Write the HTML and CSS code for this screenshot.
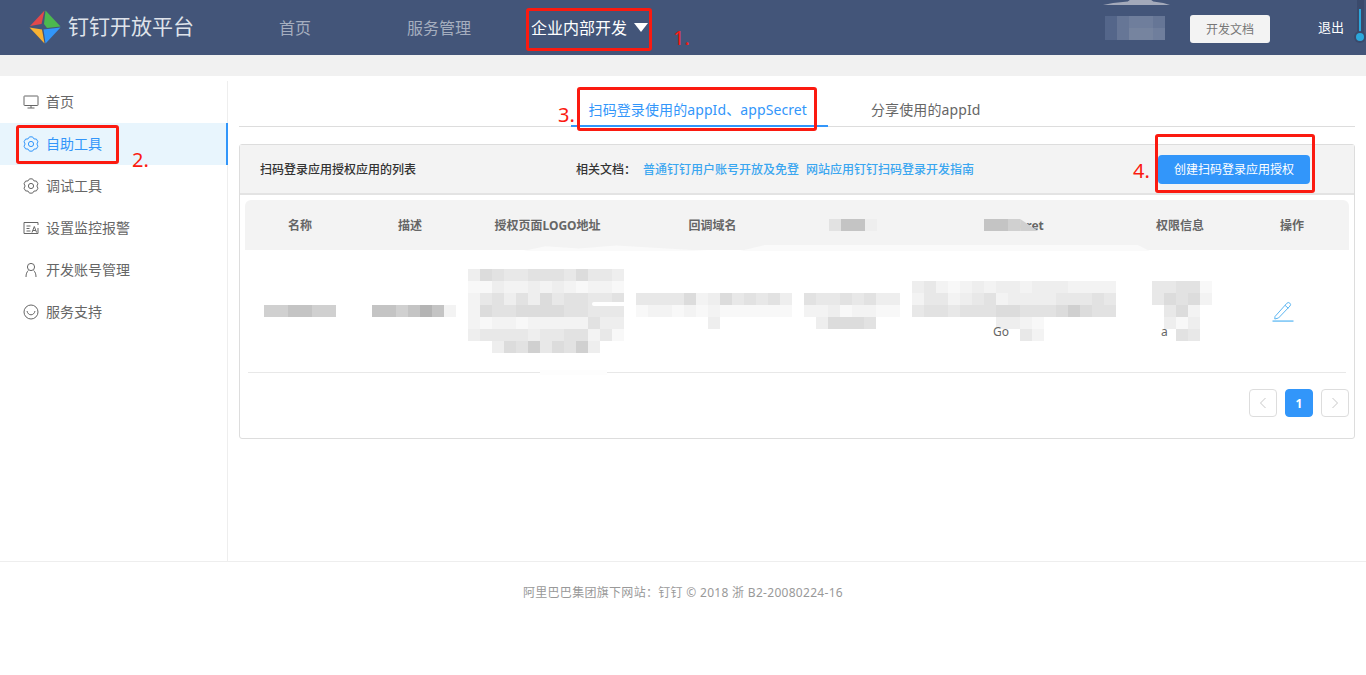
FILE: index.html
```html
<!DOCTYPE html>
<html lang="zh">
<head>
  <meta charset="UTF-8">
  <title>钉钉开放平台</title>
  <link rel="stylesheet" href="styles.css">
</head>
<body>
  <header class="topbar">
    <div class="logo">
      <svg class="logo-mark" viewBox="0 0 32 34" width="32" height="34">
        <path d="M15.5 0.5 L1 16 L12.5 14 Z" fill="#e2484a"/>
        <path d="M16.5 0.5 L31.5 16.5 L18 18 L15 14 Z" fill="#4cb84f"/>
        <path d="M0.5 17.5 L15.5 33.5 L13 19.5 Z" fill="#f9b233"/>
        <path d="M31.5 17.5 L16.5 33.5 L14.5 19.5 Z" fill="#3296fa"/>
      </svg>
      <span class="logo-text">钉钉开放平台</span>
    </div>
    <nav class="topnav">
      <a class="nav-home">首页</a>
      <a class="nav-service">服务管理</a>
      <a class="nav-current">企业内部开发<i class="caret"></i></a>
    </nav>
    <div class="top-right">
      <div class="mosaic user-mosaic" data-size="nav" data-rows="fdeed|fdgge"></div>
      <a class="doc-btn">开发文档</a>
      <a class="logout">退出</a>
    </div>
    <div class="top-smear"></div>
    <div class="top-pin"></div>
  </header>
  <div class="band"></div>

  <div class="main">
    <aside class="sidebar">
      <a class="side-item">
        <svg viewBox="0 0 16 16" width="16" height="16"><rect x="1" y="2" width="14" height="9.5" rx="0.5"/><path d="M8 11.5V14M4.5 14h7"/></svg>
        <span>首页</span>
      </a>
      <a class="side-item active">
        <svg viewBox="0 0 16 16" width="16" height="16"><path d="M6.480 .860H9.520L10.950 2.890 13.420 3.120 14.940 5.740 13.900 8 14.940 10.260 13.420 12.880 10.950 13.110 9.520 15.140H6.480L5.050 13.110 2.580 12.880 1.060 10.260 2.100 8 1.060 5.740 2.580 3.120 5.050 2.890Z"/><circle cx="8" cy="8" r="2.6"/></svg>
        <span>自助工具</span>
      </a>
      <a class="side-item">
        <svg viewBox="0 0 16 16" width="16" height="16"><path d="M6.480 .860H9.520L10.950 2.890 13.420 3.120 14.940 5.740 13.900 8 14.940 10.260 13.420 12.880 10.950 13.110 9.520 15.140H6.480L5.050 13.110 2.580 12.880 1.060 10.260 2.100 8 1.060 5.740 2.580 3.120 5.050 2.890Z"/><circle cx="8" cy="8" r="2.6"/></svg>
        <span>调试工具</span>
      </a>
      <a class="side-item">
        <svg viewBox="0 0 16 16" width="16" height="16"><path d="M15 5V2.500H1v11h14V8"/><path d="M3.500 6h4M3.500 8.500h3M3.500 11h4M9 12.500l2.300-6 2.300 6M9.800 10.500h3"/></svg>
        <span>设置监控报警</span>
      </a>
      <a class="side-item">
        <svg viewBox="0 0 16 16" width="16" height="16"><circle cx="8" cy="5" r="3.6"/><path d="M5.300 8.500C3.800 10 3 12 3 15M10.700 8.500c1.500 1.500 2.300 3.500 2.300 6.500"/></svg>
        <span>开发账号管理</span>
      </a>
      <a class="side-item">
        <svg viewBox="0 0 16 16" width="16" height="16"><circle cx="8" cy="8" r="7"/><path d="M4 7c.6 2.600 2.200 3.800 4 3.800S11.400 9.600 12 7"/></svg>
        <span>服务支持</span>
      </a>
    </aside>

    <section class="content">
      <div class="tabs">
        <a class="tab active">扫码登录使用的appId、appSecret</a>
        <a class="tab">分享使用的appId</a>
      </div>

      <div class="card">
        <div class="card-head">
          <span class="card-title">扫码登录应用授权应用的列表</span>
          <div class="doc-links">
            <b>相关文档：</b>
            <a>普通钉钉用户账号开放及免登</a>
            <a>网站应用钉钉扫码登录开发指南</a>
          </div>
          <button class="create-btn">创建扫码登录应用授权</button>
        </div>

        <div class="card-body">
          <div class="t-row t-head">
            <span>名称</span>
            <span>描述</span>
            <span>授权页面LOGO地址</span>
            <span>回调域名</span>
            <div class="mosaic" data-rows="5883"></div>
            <span class="secret-head"><i class="mosaic secret-mosaic" data-rows="887"></i>cret</span>
            <span>权限信息</span>
            <span class="op-head">操作</span>
          </div>
          <div class="t-smear smear-a"></div>
          <div class="t-smear smear-b"></div>
          <div class="t-row t-data">
            <div class="mosaic name-mosaic" data-rows="778877"></div>
            <div class="mosaic desc-mosaic" data-rows="8878982"></div>
            <div class="mosaic logo-mosaic" data-rows="3654455546443|1132232321221|2453536455445|2655666655444|2122122222533|3444434455241|0036574657300"></div>
            <div class="mosaic cb-mosaic" data-rows="4444623645453|1221212111111|0000003000000"></div>
            <div class="mosaic next-mosaic" data-rows="54454533|22312211|03666500"></div>
            <div class="mosaic" data-rows="34212323323332222|24423452333344454|45545556655567655|00000003321000000|00000000042000000"></div>
            <div class="mosaic perm-mosaic" data-rows="44551|46562|04620|03130|00540"></div>
            <div class="op-cell">
              <svg viewBox="0 0 22 22" width="22" height="22"><path d="M3 16.500 L14.800 3.300 Q16.200 1.800 17.800 3.100 Q19.300 4.500 18 6 L6.500 18 L2.800 19 Z M13 5.300 L16.300 8.300"/><path class="pen-line" d="M0.500 21.200H21.500"/></svg>
            </div>
          </div>
          <div class="t-smear smear-c"></div>
          <div class="t-smear smear-d"></div>
          <div class="pager">
            <a class="page-btn"><svg viewBox="0 0 8 12" width="8" height="12"><path d="M6.500 1L1.500 6l5 5"/></svg></a>
            <a class="page-btn current">1</a>
            <a class="page-btn"><svg viewBox="0 0 8 12" width="8" height="12"><path d="M1.500 1l5 5-5 5"/></svg></a>
          </div>
        </div>
      </div>
    </section>
  </div>

  <footer class="footer">阿里巴巴集团旗下网站：钉钉 © 2018 浙 B2-20080224-16</footer>

  <!-- 标注 -->
  <div class="mark-box box-1"></div>
  <div class="mark-box box-2"></div>
  <div class="mark-box box-3"></div>
  <div class="mark-box box-4"></div>
  <span class="mark-num num-1">1.</span>
  <span class="mark-num num-2">2.</span>
  <span class="mark-num num-3">3.</span>
  <span class="mark-num num-4">4.</span>
  <span class="left-text left-go">Go</span>
  <span class="left-text left-a">a</span>

  <script src="script.js"></script>
</body>
</html>
```

FILE: styles.css
```css
html, body {
  margin: 0;
  padding: 0;
  height: 100%;
  background: #fff;
  font-family: "Noto Sans", "Noto Sans CJK SC", sans-serif;
  font-size: 14px;
  color: #666;
  overflow: hidden;
}

/* 顶部导航 */
.topbar {
  position: relative;
  display: flex;
  align-items: center;
  height: 55px;
  background: #435579;
}

.logo {
  display: flex;
  align-items: center;
  margin-left: 29px;
  width: 250px;
  flex: none;
}

.logo-mark {
  flex: none;
  margin-top: -1px;
}

.logo-text {
  margin-left: 7px;
  margin-top: -3px;
  font-size: 21px;
  line-height: 28px;
  color: #dfe3ea;
}

.topnav {
  display: flex;
  align-items: center;
  margin-top: -2px;
  font-size: 16px;
  color: #a5aebf;
}

.nav-service {
  margin-left: 96px;
}

.nav-current {
  display: flex;
  align-items: center;
  margin-left: 60px;
  color: #fff;
}

.caret {
  margin-left: 7px;
  margin-top: 2px;
  border-left: 7px solid transparent;
  border-right: 7px solid transparent;
  border-top: 9px solid #fff;
}

.top-right {
  display: flex;
  align-items: center;
  margin-left: auto;
  padding-right: 20px;
  margin-right: 2px;
}

.user-mosaic {
  margin-right: 25px;
}

.doc-btn {
  width: 80px;
  height: 28px;
  margin-top: 3px;
  line-height: 30px;
  text-align: center;
  font-size: 12px;
  color: #777;
  background: #f3f3f3;
  border-radius: 3px;
}

.logout {
  margin-left: 48px;
  margin-top: -2px;
  font-size: 13px;
  color: #fff;
}

.top-smear {
  position: absolute;
  left: 1103px;
  top: 0;
  width: 67px;
  height: 5px;
  background: #a3a9ba;
  clip-path: polygon(0 100%, 15% 60%, 37% 30%, 40% 0, 72% 0, 75% 30%, 90% 60%, 100% 100%);
}

.top-pin {
  position: absolute;
  left: 1357px;
  top: 0;
  width: 7px;
  height: 36px;
  background: #3a4a6c;
}

.top-pin::before {
  content: '';
  position: absolute;
  left: 2px;
  top: 9px;
  bottom: 0;
  width: 2px;
  background: #2ba8dc;
}

.top-pin::after {
  content: '';
  position: absolute;
  left: -1px;
  top: 33px;
  width: 8px;
  height: 8px;
  border-radius: 50%;
  background: #2ba8dc;
  box-shadow: 0 0 0 2px #3a4a6c;
}

.band {
  height: 21px;
  background: #f1f1f1;
}

/* 主体 */
.main {
  display: flex;
  height: 480px;
  padding-top: 5px;
  border-bottom: 1px solid #eee;
  box-sizing: content-box;
}

.sidebar {
  flex: none;
  width: 227px;
  border-right: 1px solid #eee;
}

.side-item {
  display: flex;
  align-items: center;
  height: 42px;
  padding-left: 23px;
  color: #666;
  box-sizing: border-box;
}

.side-item svg {
  flex: none;
  fill: none;
  stroke: #666;
  stroke-width: 1;
}

.side-item span {
  margin-left: 7px;
  margin-top: -2px;
}

.side-item.active {
  color: #3296fa;
  background: #e8f5fd;
  border-right: 2px solid #3296fa;
  margin-right: -1px;
}

.side-item.active svg {
  stroke: #3296fa;
}

.content {
  flex: none;
  width: 1116px;
  margin-left: 11px;
}

.tabs {
  display: flex;
  justify-content: center;
  height: 45px;
  border-bottom: 1px solid #ddd;
}

.tab {
  height: 46px;
  line-height: 57px;
  padding: 0 21px 0 18px;
  box-sizing: border-box;
  color: #666;
  white-space: nowrap;
  letter-spacing: .1px;
}

.tab + .tab {
  padding: 0 43px;
}

.tab.active {
  color: #3296fa;
  border-bottom: 2px solid #3296fa;
}

/* 列表卡片 */
.card {
  margin-top: 17px;
  height: 295px;
  border: 1px solid #ddd;
  border-radius: 3px;
  box-sizing: border-box;
}

.card-head {
  display: flex;
  align-items: center;
  height: 50px;
  padding-left: 20px;
  box-sizing: border-box;
  background: #f3f3f3;
  border-bottom: 2px solid #e3e3e3;
  font-size: 12px;
  color: #333;
}

.card-title {
  font-weight: 500;
}

.doc-links {
  display: flex;
  margin-left: 160px;
  color: #3aa6f0;
  font-weight: 500;
}

.doc-links b {
  font-weight: 500;
  color: #333;
  margin-right: 7px;
}

.doc-links a + a {
  margin-left: 7px;
}

.create-btn {
  margin-left: auto;
  margin-right: 44px;
  width: 152px;
  height: 29px;
  padding: 0;
  border: none;
  border-radius: 4px;
  background: #3296fa;
  color: #fff;
  font-family: inherit;
  font-size: 12px;
}

.card-body {
  position: relative;
  padding: 5px 5px 0;
}

.t-row {
  display: grid;
  grid-template-columns: 110px 110px 165px 165px 115px 208px 124px 107px;
  align-items: center;
  justify-items: center;
}

.t-head {
  height: 50px;
  background: #f3f3f3;
  border-radius: 6px 6px 0 0;
  font-size: 12px;
  font-weight: 700;
  color: #666;
}

.t-data {
  height: 122px;
  margin: 0 3px;
  grid-template-columns: 107px 110px 165px 165px 115px 208px 124px 104px;
  border-bottom: 1px solid #e8e8e8;
}

.t-smear {
  position: absolute;
  top: 50px;
  height: 6px;
  background: #fafafa;
}

.smear-a {
  left: 283px;
  width: 186px;
  clip-path: polygon(0 100%, 12% 20%, 30% 60%, 50% 10%, 100% 100%);
}

.smear-b {
  left: 500px;
  width: 410px;
  clip-path: polygon(0 100%, 6% 0, 97% 0, 100% 100%);
}

.smear-c {
  left: 352px;
  top: 107px;
  width: 34px;
  height: 4px;
  background: #fff;
  border-radius: 2px;
}

.smear-d {
  left: 300px;
  top: 175px;
  width: 67px;
  height: 5px;
  background: #fdfdfd;
}

/* 打码块 */
.mosaic {
  display: grid;
  grid-auto-columns: 12px;
  grid-auto-rows: 12px;
}

.mosaic span {
  display: block;
}

.name-mosaic {
  margin-left: -4px;
}

.desc-mosaic {
  margin-left: 8px;
}

.logo-mosaic {
  margin-left: -4px;
}

.cb-mosaic {
  margin-left: 3px;
}

.next-mosaic {
  margin-left: -2px;
}

.perm-mosaic {
  margin-left: 3px;
}

.secret-head {
  display: flex;
  align-items: center;
}

.secret-mosaic {
  position: relative;
  display: inline-grid;
}

.secret-mosaic::after {
  content: '';
  position: absolute;
  left: 100%;
  top: 0;
  width: 18px;
  height: 12px;
  background: #d0d0d0;
  clip-path: polygon(0 0, 100% 100%, 0 100%);
}

.s0 { background: transparent; }
.s1 { background: #f8f8f8; }
.s2 { background: #f3f3f3; }
.s3 { background: #eeeeee; }
.s4 { background: #e8e8e8; }
.s5 { background: #e2e2e2; }
.s6 { background: #dcdcdc; }
.s7 { background: #d0d0d0; }
.s8 { background: #c4c4c4; }
.s9 { background: #b4b4b4; }
.sd { background: #667696; }
.se { background: #6f7e9c; }
.sf { background: #54668a; }
.sg { background: #76849f; }

.op-cell {
  padding-right: 22px;
  height: 22px;
  margin-top: -1px;
}

.op-cell svg {
  display: block;
  fill: none;
  stroke: #5cb6f2;
  stroke-width: 1;
}

.op-cell .pen-line {
  stroke: #8ccdf7;
  stroke-width: 2;
}

.op-head {
  margin-left: -7px;
}

.pager {
  display: flex;
  justify-content: flex-end;
  gap: 8px;
  margin-top: 16px;
}

.page-btn {
  display: flex;
  align-items: center;
  justify-content: center;
  width: 28px;
  height: 28px;
  border: 1px solid #ddd;
  border-radius: 4px;
  box-sizing: border-box;
  font-size: 12px;
  font-weight: 700;
}

.page-btn svg {
  fill: none;
  stroke: #c8c8c8;
  stroke-width: 1;
}

.page-btn.current {
  background: #3296fa;
  border-color: #3296fa;
  color: #fff;
}

.footer {
  height: 113px;
  padding-top: 22px;
  box-sizing: border-box;
  text-align: center;
  font-size: 12px;
  line-height: 17px;
  letter-spacing: .3px;
  color: #999;
}

/* 红色标注 */
.mark-box {
  position: absolute;
  border: 3px solid #fb1a10;
  border-radius: 3px;
  box-sizing: border-box;
}

.box-1 { left: 526px; top: 8px; width: 126px; height: 43px; }
.box-2 { left: 16px; top: 125px; width: 103px; height: 39px; }
.box-3 { left: 577px; top: 87px; width: 240px; height: 44px; }
.box-4 { left: 1155px; top: 134px; width: 160px; height: 59px; }

.mark-num {
  position: absolute;
  font-size: 20px;
  line-height: 24px;
  color: #fb1a10;
}

.num-1 { left: 673px; top: 26px; }
.num-2 { left: 132px; top: 148px; }
.num-3 { left: 558px; top: 103px; }
.num-4 { left: 1133px; top: 159px; }

.left-text {
  position: absolute;
  font-size: 12px;
  line-height: 14px;
  color: #666;
}

.left-go { left: 993px; top: 325px; }
.left-a { left: 1161px; top: 325px; }
```

FILE: script.js
```js
// 按 data-rows 生成打码色块
document.querySelectorAll('.mosaic').forEach(function (el) {
  var rows = el.getAttribute('data-rows').split('|');
  rows.forEach(function (row, y) {
    row.split('').forEach(function (ch, x) {
      var cell = document.createElement('span');
      cell.className = 's' + ch;
      cell.style.gridRow = y + 1;
      cell.style.gridColumn = x + 1;
      el.appendChild(cell);
    });
  });
});
```
